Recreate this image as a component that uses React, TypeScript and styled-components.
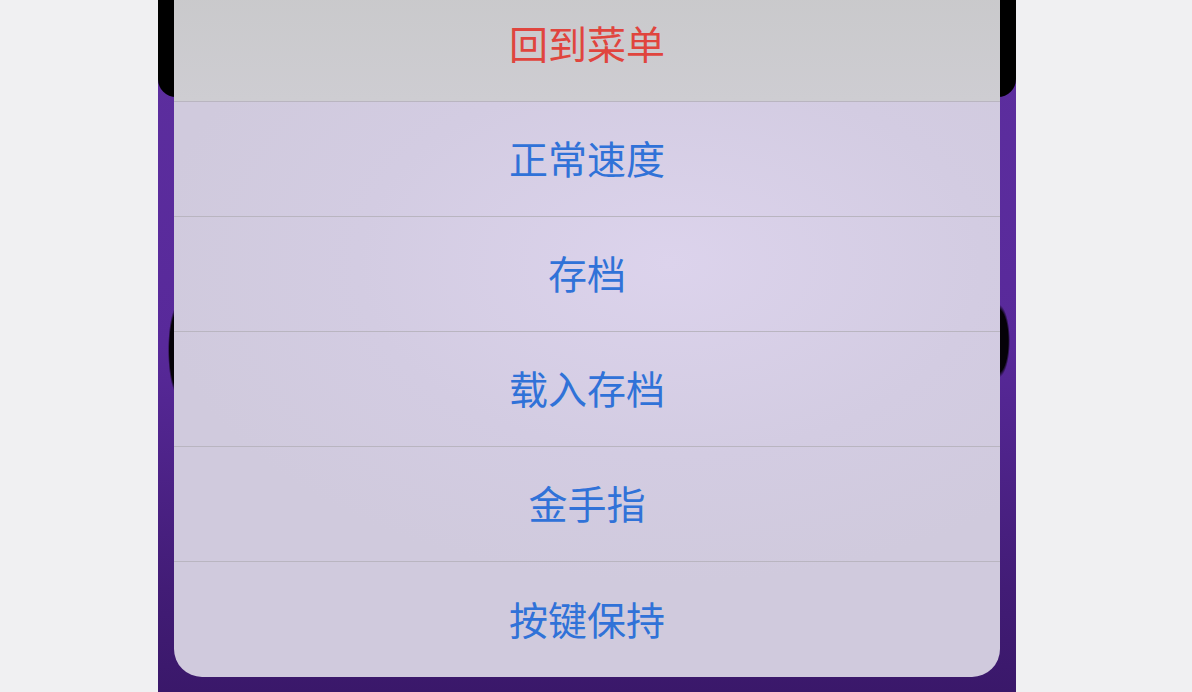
import React from 'react';
import styled, { createGlobalStyle } from 'styled-components';

const GlobalStyle = createGlobalStyle`
  html, body {
    margin: 0;
    padding: 0;
    background: #f0f0f2;
  }
  body {
    font-family: 'Noto Sans CJK SC', 'Noto Sans', sans-serif;
  }
`;

const Page = styled.div`
  width: 1192px;
  height: 692px;
  display: flex;
  padding-left: 158px;
  box-sizing: border-box;
  background: #f0f0f2;
  overflow: hidden;
`;

// game screen behind the action sheet: purple frame, black top bar and side bumps
const Phone = styled.div`
  position: relative;
  width: 858px;
  height: 692px;
  padding: 0 16px;
  box-sizing: border-box;
  overflow: hidden;
  background:
    radial-gradient(ellipse 10px 45px at 20px 350px, #050208 85%, transparent 100%),
    radial-gradient(ellipse 12px 37px at 840px 341px, #050208 85%, transparent 100%),
    linear-gradient(to bottom, #5d2f9f 0%, #58299a 50%, #421c76 85%, #3a186a 100%);

  &::before {
    content: '';
    position: absolute;
    left: 0;
    right: 0;
    top: 0;
    height: 97px;
    background: #000;
    border-radius: 0 0 18px 18px;
  }
`;

const Sheet = styled.div`
  position: relative;
  margin-top: -13px;
  display: flex;
  flex-direction: column;
  border-radius: 0 0 28px 28px;
  overflow: hidden;
  background: radial-gradient(ellipse 520px 320px at 60% 40%, #dcd3ec 0%, #d3cce2 60%, #d0cadd 100%);
`;

const Row = styled.div<{ $muted?: boolean; $last?: boolean }>`
  height: 115px;
  box-sizing: border-box;
  display: flex;
  align-items: center;
  justify-content: center;
  padding-bottom: 3px;
  border-bottom: ${(p) => (p.$last ? 'none' : '1px solid #b9b5c0')};
  background: ${(p) => (p.$muted ? 'linear-gradient(to bottom, #c9c9cb, #cecdd2)' : 'transparent')};
`;

const Label = styled.span<{ $danger?: boolean }>`
  font-size: 39px;
  line-height: 1;
  color: ${(p) => (p.$danger ? '#e0453e' : '#3072d8')};
`;

const items = ['正常速度', '存档', '载入存档', '金手指', '按键保持'];

export default function App() {
  return (
    <>
      <GlobalStyle />
      <Page>
        <Phone>
          <Sheet>
            <Row $muted>
              <Label $danger>回到菜单</Label>
            </Row>
            {items.map((t, i) => (
              <Row key={t} $last={i === items.length - 1}>
                <Label>{t}</Label>
              </Row>
            ))}
          </Sheet>
        </Phone>
      </Page>
    </>
  );
}
